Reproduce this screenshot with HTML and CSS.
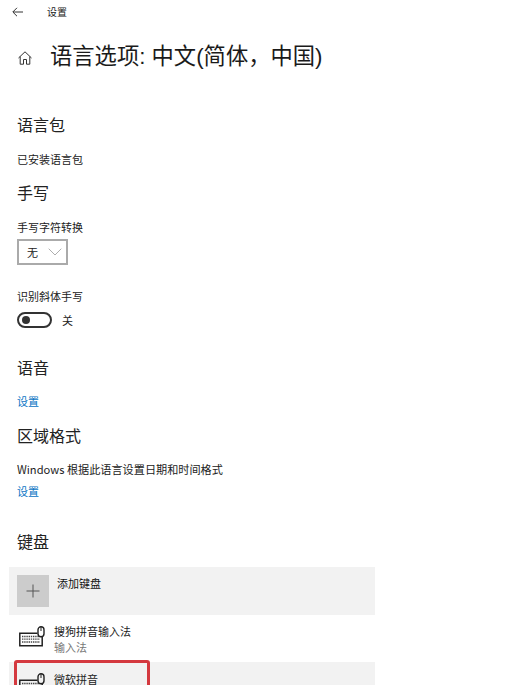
FILE: index.html
```html
<!DOCTYPE html>
<html lang="zh-CN">
<head>
<meta charset="utf-8">
<title>设置</title>
<link rel="stylesheet" href="styles.css">
</head>
<body>
<div class="page">
  <header class="topbar">
    <svg class="back" viewBox="0 0 11 10" width="11" height="10"><path d="M11 5H1M5 .8 .8 5 5 9.2" fill="none" stroke="#333" stroke-width="1"/></svg>
    <span class="topbar-title">设置</span>
  </header>
  <div class="title-row">
    <svg class="home" viewBox="0 0 16 16" width="16" height="16"><path d="M1.5 8 8 1.8 14.5 8M3.2 6.6V14.2H6.5V9.5H9.5V14.2H12.8V6.6" fill="none" stroke="#333" stroke-width="1"/></svg>
    <h1 class="title">语言选项: 中文(简体，中国)</h1>
  </div>
  <h2 class="head head-pack">语言包</h2>
  <p class="line line-pack">已安装语言包</p>
  <h2 class="head head-hand">手写</h2>
  <p class="line line-conv">手写字符转换</p>
  <div class="select"><span>无</span><svg viewBox="0 0 14 8" width="14" height="8"><path d="M.7 .7 7 7 13.3 .7" fill="none" stroke="#999" stroke-width=".8"/></svg></div>
  <p class="line line-italic">识别斜体手写</p>
  <div class="toggle-row"><span class="toggle"><i class="knob"></i></span><span class="toggle-label">关</span></div>
  <h2 class="head head-speech">语音</h2>
  <a class="link link-speech">设置</a>
  <h2 class="head head-region">区域格式</h2>
  <p class="line line-region">Windows 根据此语言设置日期和时间格式</p>
  <a class="link link-region">设置</a>
  <h2 class="head head-kb">键盘</h2>
  <div class="add-row">
    <span class="plus"><svg viewBox="0 0 14 14" width="14" height="14"><path d="M7 .5V13.5M.5 7H13.5" stroke="#555" stroke-width="1" fill="none"/></svg></span>
    <span class="add-label">添加键盘</span>
  </div>
  <div class="kb-row">
    <svg class="kb-icon" viewBox="0 0 26 21" width="26" height="21"><path d="M18.5 7.2H.8V19.8H23.2V11" fill="none" stroke="#222" stroke-width="1.5"/><path d="M3 10.5H20M3 13.2H21M3 16H21" fill="none" stroke="#444" stroke-width="1.3" stroke-dasharray="1.4 .8"/><rect x="19" y=".8" width="6" height="10" rx="3" fill="#fff" stroke="#222" stroke-width="1.4"/><path d="M22 1V5" stroke="#222"/></svg>
    <div class="kb-text"><div class="kb-name">搜狗拼音输入法</div><div class="kb-sub">输入法</div></div>
  </div>
  <div class="kb-row kb-active">
    <svg class="kb-icon" viewBox="0 0 26 21" width="26" height="21"><path d="M18.5 7.2H.8V19.8H23.2V11" fill="none" stroke="#222" stroke-width="1.5"/><path d="M3 10.5H20M3 13.2H21M3 16H21" fill="none" stroke="#444" stroke-width="1.3" stroke-dasharray="1.4 .8"/><rect x="19" y=".8" width="6" height="10" rx="3" fill="#f2f2f2" stroke="#222" stroke-width="1.4"/><path d="M22 1V5" stroke="#222"/></svg>
    <div class="kb-text"><div class="kb-name">微软拼音</div></div>
    <div class="highlight"></div>
  </div>
</div>
</body>
</html>
```
FILE: styles.css
```css
* { box-sizing: border-box; }
html, body { margin: 0; padding: 0; background: #fff; }
body { font-family: "Noto Sans CJK SC", "Liberation Sans", sans-serif; color: #111; overflow: hidden; }
.page { width: 509px; height: 685px; overflow: hidden; }
.topbar { display: flex; align-items: center; height: 24px; padding-left: 12px; }
.back { flex: none; margin-top: 0; }
.topbar-title { margin-left: 24px; font-size: 10px; line-height: 14px; color: #222; }
.title-row { display: flex; align-items: center; height: 40px; margin-top: 13px; padding-left: 17px; }
.home { flex: none; margin-top: 2px; }
.title { margin: 0 0 0 17px; font-size: 22.3px; line-height: 40px; font-weight: 400; white-space: nowrap; font-family: "Liberation Sans", "Noto Sans CJK SC", sans-serif; color: #1a1a1a; }
.head { margin: 0; padding-left: 17px; font-size: 16px; line-height: 22px; font-weight: 400; color: #222; }
.line { margin: 0; padding-left: 17px; font-size: 11px; line-height: 16px; color: #222; }
.head-pack { margin-top: 36px; }
.line-pack { margin-top: 16px; }
.head-hand { margin-top: 14px; }
.line-conv { margin-top: 16px; }
.select { display: flex; align-items: center; justify-content: space-between; width: 51px; height: 26px; margin: 4px 0 0 17px; padding: 0 4px 0 8px; border: 2px solid #aaa; font-size: 11px; color: #222; }
.line-italic { margin-top: 23px; }
.toggle-row { display: flex; align-items: center; margin-top: 7px; padding-left: 17px; height: 18px; }
.toggle { display: flex; align-items: center; width: 35px; height: 16px; padding-left: 3px; border: 2px solid #333; border-radius: 8px; }
.knob { width: 8px; height: 8px; border-radius: 50%; background: #333; }
.toggle-label { margin-left: 10px; font-size: 11px; color: #222; }
.link { display: block; padding-left: 17px; font-size: 11px; line-height: 16px; color: #0a74c4; }
.head-speech { margin-top: 27px; }
.link-speech { margin-top: 15px; }
.head-region { margin-top: 15px; }
.line-region { margin-top: 15px; font-size: 11.15px; }
.link-region { margin-top: 6px; }
.head-kb { margin-top: 31px; }
.add-row { display: flex; align-items: flex-start; width: 366px; height: 48px; margin: 15px 0 0 9px; padding: 8px; background: #f2f2f2; }
.plus { display: flex; align-items: center; justify-content: center; width: 32px; height: 32px; background: #ccc; }
.add-label { margin-left: 8px; font-size: 11px; line-height: 16px; }
.kb-row { position: relative; display: flex; align-items: flex-start; width: 366px; height: 47px; margin-left: 9px; padding: 8px 0 0 10px; }
.kb-icon { flex: none; margin-top: 3px; }
.kb-text { margin-left: 9px; }
.kb-name { font-size: 11px; line-height: 16px; color: #222; }
.kb-sub { font-size: 11px; line-height: 16px; color: #777; }
.kb-active { background: #f2f2f2; padding-top: 9px; }
.kb-active .kb-icon { margin-top: 2px; }
.highlight { position: absolute; left: 5px; top: -2px; width: 136px; height: 60px; border: 3px solid #d4393f; border-radius: 3px; }
```
